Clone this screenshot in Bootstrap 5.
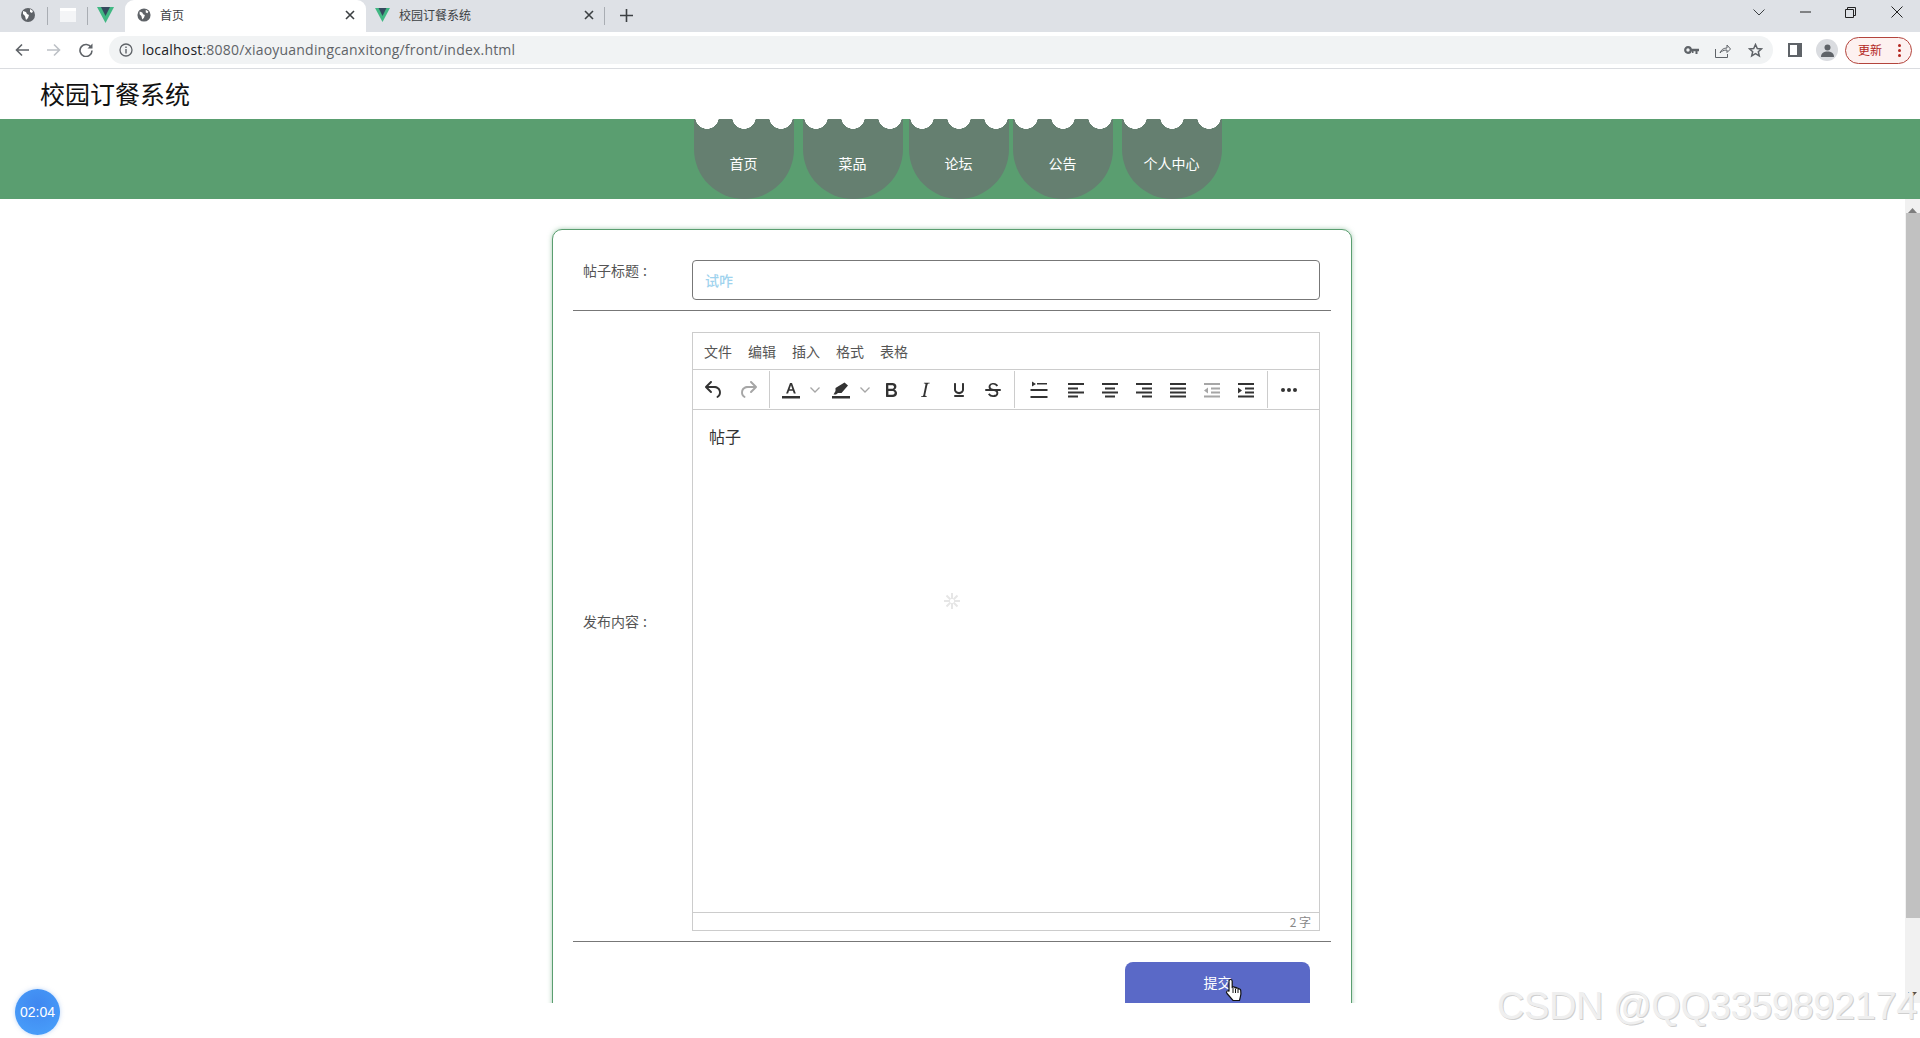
<!DOCTYPE html>
<html lang="zh-CN">
<head>
  <meta charset="UTF-8" />
  <meta name="viewport" content="width=device-width, initial-scale=1" />
  <title>校园订餐系统</title>
  <link href="https://cdn.jsdelivr.net/npm/bootstrap@5.3.3/dist/css/bootstrap.min.css" rel="stylesheet" />
  <style>
    body {
      height: 1038px;
      overflow: hidden;
      background: #fff;
      font-family: "Liberation Sans", "Noto Sans CJK SC", sans-serif;
    }
    .cn { font-family: "Noto Sans CJK SC", sans-serif; }

    /* browser chrome */
    .tab-strip { height: 32px; background: #dee1e6; color: #3c4043; font-size: 12px; }
    .tab-strip > div { padding-bottom: 2px; }
    .tab-strip > .win-btns { padding-bottom: 8px; }
    .strip-slot { width: 19px; height: 32px; margin-left: 18px; margin-right: 10px; }
    .strip-sep { width: 1px; height: 18px; background: #a9adb3; }
    .tab-live { width: 241px; height: 32px; background: #fff; border-radius: 9px 9px 0 0; margin-left: 3px; padding: 0 11px 0 12px; }
    .tab-idle { width: 238px; height: 32px; padding: 0 10px 0 9px; }
    .tab-name { flex: 1; margin-left: 9px; }
    .win-btns { margin-left: auto; }
    .win-btn { width: 41px; height: 28px; }
    .addr-row { height: 37px; border-bottom: 1px solid #dadce0; background: #fff; padding-top: 4px; }
    .addr-nav { width: 32px; height: 28px; }
    .addr-pill { width: 1664px; height: 28px; background: #f1f3f4; margin-left: 7px; padding: 0 2px 0 10px; font-size: 14px; color: #5f6368; }
    .addr-pill b { font-weight: 400; color: #202124; }
    .addr-url { margin-left: 9px; margin-top: -1px; font-family: "Open Sans", sans-serif; font-size: 14px; letter-spacing: .2px; }
    .addr-end { margin-left: auto; }
    .addr-tool { width: 32px; }
    .avatar-dot { width: 22px; height: 22px; background: #dadce0; margin-left: 14px; }
    .update-pill { width: 67px; height: 27px; margin-left: 7px; background: #fdf1f0; border: 1px solid #b3443c; color: #b3261e; font-size: 12px; padding: 0 10px 0 12px; }

    /* site header */
    .site-head { height: 50px; padding-left: 40px; font-size: 25px; color: #111; }
    .site-nav { height: 80px; background: #5a9e70; padding-right: 5px; gap: 6px; }
    .nav-pill {
      width: 100px;
      height: 80px;
      padding: 8px 0 0;
      color: #fff;
      font-size: 14px;
      background:
        radial-gradient(circle 12px at 13px -2px, #fff 97%, transparent 100%),
        radial-gradient(circle 12px at 50px -2px, #fff 97%, transparent 100%),
        radial-gradient(circle 12px at 87px -2px, #fff 97%, transparent 100%),
        #657f70;
      border-radius: 0 0 50px 50px;
    }
    .nav-pill:hover, .nav-pill:focus { color: #fff; }
    .nav-pill-far { margin-left: 3px; }
    .nav-pill-near { margin-left: -2px; }

    /* page */
    .page-area { height: 804px; }
    .page-main { padding: 30px 1px 0 0; }
    .post-card {
      width: 800px;
      height: 900px;
      border: 1px solid #5a9e70;
      border-radius: 10px;
      box-shadow: 0 0 5px rgba(90, 158, 112, .55);
      padding: 30px 20px 0;
      color: #555;
      font-size: 14px;
    }
    .form-line { padding: 0 10px; border-bottom: 1px solid #777; }
    .field-name { width: 109px; flex: none; line-height: 24px; }
    .field-colon { margin-left: 4px; }
    .title-input.form-control {
      height: 40px;
      width: 628px;
      flex: none;
      border: 1px solid #777;
      border-radius: 4px;
      padding: 0 12px;
      color: #9fd3ee;
      font-size: 14px;
      font-weight: 500;
    }
    .line-title { padding-bottom: 10px; }
    .line-title .field-name { margin-top: -2px; }
    .line-editor { padding-top: 21px; padding-bottom: 10px; }
    .line-editor .field-name { padding-bottom: 21px; }

    /* editor */
    .editor-box { width: 628px; height: 599px; border: 1px solid #ccc; }
    .editor-menu { height: 37px; padding-left: 11px; gap: 16px; border-bottom: 1px solid #ccc; color: #555; font-size: 14px; flex: none; }
    .editor-bar { height: 40px; border-bottom: 1px solid #ccc; flex: none; padding-top: 1px; }
    .bar-group { height: 37px; padding-top: 2px; padding-left: 4px; padding-right: 4px; border-right: 1px solid #ccc; }
    .bar-group-mid { padding-left: 4px; padding-right: 4px; }
    .bar-group-align { padding-left: 7px; padding-right: 4px; }
    .bar-group-end { border-right: 0; padding-left: 4px; }
    .bar-btn { width: 34px; height: 34px; flex: none; border: 0; background: transparent; padding: 0; color: #333; }
    .bar-btn svg { display: block; margin: 5px; }
    .bar-btn.is-off { color: #a6a6a6; }
    .bar-caret { width: 14px; height: 34px; flex: none; margin-right: 2px; }
    .bar-gap { margin-right: 3px; }
    .editor-body { flex: 1; padding: 14px 16px; color: #333; font-size: 16px; line-height: 24px; }
    .editor-spin { position: absolute; left: 249px; top: 181px; }
    .editor-foot { height: 18px; flex: none; border-top: 1px solid #ccc; padding-right: 8px; color: #888; font-size: 12px; line-height: 17px; }

    .send-line { padding: 20px 21px 0 0; }
    .send-btn {
      position: relative;
      width: 185px;
      height: 48px;
      padding: 0 0 7px;
      border: 0;
      border-radius: 8px;
      background: #5a69c7;
      color: #fff;
      font-size: 14px;
    }
    .send-btn:hover { background: #5a69c7; color: #fff; }
    .send-hand { position: absolute; left: 100px; top: 16px; }

    .page-scroll { width: 15px; flex: none; background: #f1f1f1; margin-left: auto; }
    .scroll-thumb { height: 705px; margin: 0 0 0 1px; background: #c1c1c1; }
    .scroll-up { height: 14px; }
    .scroll-down { height: 20px; margin-top: auto; padding-bottom: 6px; }

    /* overlays */
    .rec-timer {
      position: absolute;
      left: 15px;
      top: 989px;
      width: 45px;
      height: 46px;
      color: #fff;
      font-size: 14px;
      background: radial-gradient(circle at 50% 35%, #3f87f0, #4aa2fb);
      box-shadow: 0 0 4px rgba(120, 170, 240, .5);
    }
    .mark-text {
      position: absolute;
      right: 3px;
      top: 983px;
      font-size: 38px;
      line-height: 46px;
      color: #efefef;
      letter-spacing: -.4px;
      text-shadow: 1px 1px 0 #cfcfcf;
      white-space: nowrap;
    }
  </style>
</head>
<body class="position-relative">

  <!-- tab strip -->
  <div class="tab-strip d-flex align-items-center">
    <div class="strip-slot d-flex align-items-center justify-content-center">
      <svg width="16" height="16" viewBox="0 0 16 16"><circle cx="8" cy="8" r="7" fill="#5f6368"/><path d="M3 4l3 1 1 2 2 1-1 3-2 2-1-4-2-2zM10 2l3 2-1 2-2-1z" fill="#fff"/></svg>
    </div>
    <span class="strip-sep"></span>
    <div class="d-flex align-items-center justify-content-center" style="width:39px">
      <svg width="16" height="14" viewBox="0 0 16 14"><rect width="16" height="14" fill="#f4f5f7"/><rect width="16" height="3" fill="#fff"/></svg>
    </div>
    <span class="strip-sep"></span>
    <div class="d-flex align-items-center justify-content-center" style="width:34px">
      <svg width="17" height="16" viewBox="0 0 17 16"><path d="M0 0h17L8.500 16z" fill="#41b883"/><path d="M4 0h9L8.500 9z" fill="#35495e"/></svg>
    </div>

    <div class="tab-live d-flex align-items-center cn">
      <svg width="14" height="14" viewBox="0 0 16 16"><circle cx="8" cy="8" r="7.500" fill="#5f6368"/><path d="M3 4l3 1 1 2 2 1-1 3-2 2-1-4-2-2zM10 2l3 2-1 2-2-1z" fill="#fff"/></svg>
      <span class="tab-name">首页</span>
      <svg width="10" height="10" viewBox="0 0 10 10"><path d="M1 1l8 8M9 1l-8 8" stroke="#3c4043" stroke-width="1.600"/></svg>
    </div>
    <div class="tab-idle d-flex align-items-center cn">
      <svg width="15" height="14" viewBox="0 0 17 16"><path d="M0 0h17L8.500 16z" fill="#41b883"/><path d="M4 0h9L8.500 9z" fill="#35495e"/></svg>
      <span class="tab-name">校园订餐系统</span>
      <svg width="10" height="10" viewBox="0 0 10 10"><path d="M1 1l8 8M9 1l-8 8" stroke="#3c4043" stroke-width="1.600"/></svg>
    </div>
    <span class="strip-sep"></span>
    <div class="d-flex align-items-center justify-content-center" style="width:43px">
      <svg width="13" height="13" viewBox="0 0 13 13"><path d="M6.500 0v13M0 6.500h13" stroke="#3c4043" stroke-width="1.600"/></svg>
    </div>

    <div class="win-btns d-flex align-items-center">
      <div class="win-btn d-flex align-items-center justify-content-center">
        <svg width="12" height="7" viewBox="0 0 12 7"><path d="M.5.500L6 6l5.500-5.500" fill="none" stroke="#3c4043"/></svg>
      </div>
      <div class="win-btn d-flex align-items-center justify-content-center" style="margin-left:6px">
        <svg width="11" height="2" viewBox="0 0 11 2"><path d="M0 1h11" stroke="#222" stroke-width="1"/></svg>
      </div>
      <div class="win-btn d-flex align-items-center justify-content-center" style="margin-left:4px">
        <svg width="11" height="11" viewBox="0 0 11 11"><path d="M.5 2.500h8v8h-8zM2.500 2.500v-2h8v8h-2" fill="none" stroke="#222"/></svg>
      </div>
      <div class="win-btn d-flex align-items-center justify-content-center" style="margin-left:5px;margin-right:3px">
        <svg width="12" height="12" viewBox="0 0 12 12"><path d="M.5.500l11 11M11.500.500l-11 11" stroke="#222"/></svg>
      </div>
    </div>
  </div>

  <!-- address row -->
  <div class="addr-row d-flex align-items-start">
    <div class="d-flex" style="padding-left:6px">
      <div class="addr-nav d-flex align-items-center justify-content-center">
        <svg width="14" height="14" viewBox="0 0 14 14"><path d="M14 7H2M7 1.500L1.500 7 7 12.500" fill="none" stroke="#5f6368" stroke-width="1.600"/></svg>
      </div>
      <div class="addr-nav d-flex align-items-center justify-content-center">
        <svg width="14" height="14" viewBox="0 0 14 14"><path d="M0 7h12M7 1.500L12.500 7 7 12.500" fill="none" stroke="#bdc1c6" stroke-width="1.600"/></svg>
      </div>
      <div class="addr-nav d-flex align-items-center justify-content-center">
        <svg width="14" height="14" viewBox="0 0 14 14"><path d="M12.200 4.500A6 6 0 1 0 13 7.500" fill="none" stroke="#5f6368" stroke-width="1.600"/><path d="M13.500.500v5h-5z" fill="#5f6368"/></svg>
      </div>
    </div>
    <div class="addr-pill rounded-pill d-flex align-items-center">
      <svg width="14" height="14" viewBox="0 0 14 14"><circle cx="7" cy="7" r="6" fill="none" stroke="#5f6368" stroke-width="1.300"/><path d="M7 6v4.500M7 3.500v1.500" stroke="#5f6368" stroke-width="1.400"/></svg>
      <span class="addr-url"><b>localhost</b>:8080/xiaoyuandingcanxitong/front/index.html</span>
      <div class="addr-end d-flex align-items-center">
        <div class="addr-tool d-flex justify-content-center">
          <svg width="15" height="8" viewBox="0 0 15 8"><circle cx="4" cy="4" r="2.800" fill="none" stroke="#5f6368" stroke-width="2.200"/><path d="M6 2.800h9v2.400h-1.500V8h-2V5.200H9.500V7H8V5.200H6z" fill="#5f6368"/></svg>
        </div>
        <div class="addr-tool d-flex justify-content-center">
          <svg width="16" height="15" viewBox="0 0 16 15"><path d="M.5 6v8.500h12V11M5 10c1-3.500 4-5 7-5V2l3.500 4L12 9.500V7C9 7 6.500 8 5 10z" fill="none" stroke="#5f6368"/></svg>
        </div>
        <div class="addr-tool d-flex justify-content-center">
          <svg width="15" height="15" viewBox="0 0 15 15"><path d="M7.500 1.500l1.800 4 4.200.4-3.200 2.800 1 4.200-3.800-2.300-3.800 2.300 1-4.200L1.500 5.900l4.200-.4z" fill="none" stroke="#5f6368" stroke-width="1.500"/></svg>
        </div>
      </div>
    </div>
    <div class="d-flex align-items-center" style="height:28px;margin-left:15px">
      <svg width="14" height="14" viewBox="0 0 14 14"><path d="M0 0h14v14H0z" fill="#5f6368"/><path d="M2 2h7v10H2z" fill="#fff"/></svg>
      <div class="avatar-dot rounded-circle d-flex align-items-center justify-content-center">
        <svg width="13" height="13" viewBox="0 0 13 13"><circle cx="6.500" cy="3.500" r="3" fill="#5f6368"/><path d="M0 13c0-4 3-5.500 6.500-5.500S13 9 13 13z" fill="#5f6368"/></svg>
      </div>
      <div class="update-pill rounded-pill d-flex align-items-center justify-content-between cn">
        <span>更新</span>
        <svg width="3" height="13" viewBox="0 0 3 13"><circle cx="1.500" cy="1.500" r="1.500" fill="#b3261e"/><circle cx="1.500" cy="6.500" r="1.500" fill="#b3261e"/><circle cx="1.500" cy="11.500" r="1.500" fill="#b3261e"/></svg>
      </div>
    </div>
  </div>

  <!-- site -->
  <header class="site-head d-flex align-items-center cn">校园订餐系统</header>
  <nav class="site-nav nav justify-content-center cn">
    <a class="nav-link nav-pill d-flex align-items-center justify-content-center" href="#">首页</a>
    <a class="nav-link nav-pill nav-pill-far d-flex align-items-center justify-content-center" href="#">菜品</a>
    <a class="nav-link nav-pill d-flex align-items-center justify-content-center" href="#">论坛</a>
    <a class="nav-link nav-pill nav-pill-near d-flex align-items-center justify-content-center" href="#">公告</a>
    <a class="nav-link nav-pill nav-pill-far d-flex align-items-center justify-content-center" href="#">个人中心</a>
  </nav>

  <div class="page-area d-flex overflow-hidden">
    <main class="page-main flex-grow-1">
      <form class="post-card card mx-auto cn" onsubmit="return false">
        <div class="form-line line-title d-flex">
          <label class="field-name" for="postTitle">帖子标题<span class="field-colon">:</span></label>
          <input class="title-input form-control" id="postTitle" type="text" value="试咋" />
        </div>

        <div class="form-line line-editor d-flex align-items-center">
          <div class="field-name">发布内容<span class="field-colon">:</span></div>
          <div class="editor-box d-flex flex-column">
            <div class="editor-menu d-flex align-items-center">
              <span>文件</span><span>编辑</span><span>插入</span><span>格式</span><span>表格</span>
            </div>
            <div class="editor-bar d-flex">
              <div class="bar-group d-flex">
                <button class="bar-btn" type="button"><svg width="24" height="24" viewBox="0 0 24 24" fill="currentColor"><path d="M6.400 8H12c3.700 0 6.200 2 6.800 5.100.6 2.700-.4 5.600-2.900 6.700-.5.2-1.100 0-1.300-.5-.2-.5 0-1.100.5-1.300 1.600-.7 2.300-2.800 1.800-4.500-.4-2-2.200-3.500-4.900-3.500H6.400l3.300 3.300c.4.400.4 1 0 1.400-.4.400-1 .4-1.400 0l-5-5a1 1 0 0 1 0-1.400l5-5c.4-.4 1-.4 1.400 0 .4.400.4 1 0 1.400L6.400 8z"/></svg></button>
                <button class="bar-btn is-off" type="button"><svg width="24" height="24" viewBox="0 0 24 24" fill="currentColor"><path transform="matrix(-1 0 0 1 24 0)" d="M6.400 8H12c3.700 0 6.200 2 6.800 5.100.6 2.700-.4 5.600-2.900 6.700-.5.2-1.100 0-1.300-.5-.2-.5 0-1.100.5-1.300 1.600-.7 2.300-2.800 1.800-4.500-.4-2-2.200-3.500-4.900-3.500H6.400l3.300 3.300c.4.400.4 1 0 1.400-.4.400-1 .4-1.400 0l-5-5a1 1 0 0 1 0-1.400l5-5c.4-.4 1-.4 1.400 0 .4.400.4 1 0 1.400L6.400 8z"/></svg></button>
              </div>
              <div class="bar-group bar-group-mid d-flex">
                <button class="bar-btn" type="button"><svg width="24" height="24" viewBox="0 0 24 24" fill="currentColor"><path d="M3 18h18v2.500H3z"/><path d="M11 5h2l3.800 10.500h-2l-.9-2.700H10l-.9 2.700h-2zm-.4 6.200h2.800L12 7.300z"/></svg></button>
                <div class="bar-caret d-flex align-items-center justify-content-center"><svg width="10" height="6" viewBox="0 0 10 6"><path d="M.5.500L5 5l4.500-4.500" fill="none" stroke="#a6a6a6" stroke-width="1.300"/></svg></div>
                <button class="bar-btn" type="button"><svg width="24" height="24" viewBox="0 0 24 24" fill="currentColor"><path d="M3 18h18v2.500H3z"/><path d="M15.500 4.500l3.500 3-6.500 7.500H9l-2 1.500H4.500l2-3.500v-3z"/></svg></button>
                <div class="bar-caret d-flex align-items-center justify-content-center"><svg width="10" height="6" viewBox="0 0 10 6"><path d="M.5.500L5 5l4.500-4.500" fill="none" stroke="#a6a6a6" stroke-width="1.300"/></svg></div>
                <button class="bar-btn" type="button"><svg width="24" height="24" viewBox="0 0 24 24" fill="currentColor"><path d="M7.800 19c-.3 0-.5 0-.6-.2l-.2-.5V5.700c0-.2 0-.4.2-.5l.6-.2h5c1.500 0 2.700.3 3.500 1 .7.600 1.100 1.400 1.100 2.500a3 3 0 0 1-.6 1.900c-.4.600-1 1-1.600 1.200.4.100.9.300 1.300.6s.8.700 1 1.200c.4.400.5 1 .5 1.600 0 1.300-.4 2.300-1.300 3-.8.700-2.100 1-3.800 1H7.800zm5-8.300c.6 0 1.200-.1 1.600-.5.400-.3.600-.7.600-1.300 0-1.100-.8-1.700-2.300-1.700H9.300v3.500h3.500zm.5 6c.7 0 1.300-.1 1.700-.4.400-.4.600-.9.600-1.500s-.2-1-.7-1.400c-.4-.3-1-.4-2-.4H9.400v3.800h3.900z"/></svg></button>
                <button class="bar-btn" type="button"><svg width="24" height="24" viewBox="0 0 24 24" fill="currentColor"><path d="M16.700 4.700l-.1.900h-.3c-.6 0-1 0-1.400.3-.3.300-.4.600-.5 1.100l-2.100 9.800v.6c0 .5.400.8 1.400.8h.2l-.2.800H8l.2-.8h.2c1.100 0 1.800-.5 2-1.500l2-9.800.1-.5c0-.6-.4-.8-1.400-.8h-.3l.2-.9h5.800z"/></svg></button>
                <button class="bar-btn" type="button"><svg width="24" height="24" viewBox="0 0 24 24" fill="currentColor"><path d="M16 5c.6 0 1 .4 1 1v5.500a4 4 0 0 1-.4 1.800l-1 1.400a5.300 5.300 0 0 1-5.500 1 5 5 0 0 1-1.600-1c-.5-.4-.8-.9-1.100-1.400a4 4 0 0 1-.4-1.800V6c0-.6.400-1 1-1s1 .4 1 1v5.500c0 .3 0 .6.200 1l.6.700a3.300 3.300 0 0 0 2.200.8 3.400 3.400 0 0 0 2.200-.8c.3-.2.500-.4.600-.7.200-.4.200-.7.200-1V6c0-.6.400-1 1-1zM8 17h8c.6 0 1 .4 1 1s-.4 1-1 1H8a1 1 0 0 1 0-2z"/></svg></button>
                <button class="bar-btn" type="button"><svg width="24" height="24" viewBox="0 0 24 24" fill="currentColor"><path d="M15.600 8.500c-.5-.7-1-1.100-1.300-1.300-.6-.4-1.300-.6-2-.6-2.700 0-2.800 1.700-2.800 2.100 0 1.600 1.800 2 3.200 2.300 4.400.9 4.600 2.800 4.600 3.900 0 1.400-.7 4.100-5 4.100A6.200 6.200 0 0 1 7 16.400l1.500-1.100c.4.600 1.600 2 3.700 2 1.600 0 2.500-.4 3-1.200.4-.8.3-2-.8-2.600-.7-.4-1.600-.7-2.900-1-1-.2-3.900-.8-3.900-3.600C7.600 6 10.300 5 12.400 5c2.900 0 4.200 1.600 4.700 2.400l-1.500 1.100z"/><path d="M5 11h14a1 1 0 0 1 0 2H5a1 1 0 0 1 0-2z"/></svg></button>
              </div>
              <div class="bar-group bar-group-align d-flex">
                <button class="bar-btn bar-gap" type="button"><svg width="24" height="24" viewBox="0 0 24 24" fill="currentColor"><path d="M5 3.500l4 2.500-4 2.500zM10 5h10v1.600H10zM3.500 11h17v2h-17zM3.500 18h17v2h-17z"/></svg></button>
                <button class="bar-btn" type="button"><svg width="24" height="24" viewBox="0 0 24 24" fill="currentColor"><path d="M4 5h16v2H4zM4 9.500h10v2H4zM4 13.500h16v2H4zM4 17.500h10v2H4z"/></svg></button>
                <button class="bar-btn" type="button"><svg width="24" height="24" viewBox="0 0 24 24" fill="currentColor"><path d="M4 5h16v2H4zM7 9.500h10v2H7zM4 13.500h16v2H4zM7 17.500h10v2H7z"/></svg></button>
                <button class="bar-btn" type="button"><svg width="24" height="24" viewBox="0 0 24 24" fill="currentColor"><path d="M4 5h16v2H4zM10 9.500h10v2H10zM4 13.500h16v2H4zM10 17.500h10v2H10z"/></svg></button>
                <button class="bar-btn" type="button"><svg width="24" height="24" viewBox="0 0 24 24" fill="currentColor"><path d="M4 5h16v2H4zM4 9.500h16v2H4zM4 13.500h16v2H4zM4 17.500h16v2H4z"/></svg></button>
                <button class="bar-btn is-off" type="button"><svg width="24" height="24" viewBox="0 0 24 24" fill="currentColor"><path d="M4 5h16v2H4zM11 9.500h9v2h-9zM11 13.500h9v2h-9zM4 17.500h16v2H4zM8 9.500v6l-4-3z"/></svg></button>
                <button class="bar-btn" type="button"><svg width="24" height="24" viewBox="0 0 24 24" fill="currentColor"><path d="M4 5h16v2H4zM11 9.500h9v2h-9zM11 13.500h9v2h-9zM4 17.500h16v2H4zM4 9.500v6l4-3z"/></svg></button>
              </div>
              <div class="bar-group bar-group-end d-flex">
                <button class="bar-btn" type="button"><svg width="24" height="24" viewBox="0 0 24 24" fill="currentColor"><circle cx="6" cy="12" r="2"/><circle cx="12" cy="12" r="2"/><circle cx="18" cy="12" r="2"/></svg></button>
              </div>
            </div>
            <div class="editor-body position-relative">
              帖子
              <svg class="editor-spin" width="20" height="20" viewBox="0 0 20 20"><path d="M10 2v6M10 12v6M2 10h6M12 10h6M4.500 4.500l4 4M11.500 11.500l4 4M15.500 4.500l-4 4M8.500 11.500l-4 4" stroke="#e6e6e6" stroke-width="2"/></svg>
            </div>
            <div class="editor-foot text-end">2 字</div>
          </div>
        </div>

        <div class="send-line d-flex justify-content-end">
          <button class="send-btn btn" type="submit">
            提交
            <svg class="send-hand" width="19" height="24" viewBox="0 0 19 24"><path d="M5.500 1.500c1 0 1.700.8 1.700 1.800v6l1-.4c.8-.2 1.400.1 1.700.7.800-.4 1.600-.2 2 .6.800-.3 1.600 0 1.900.8.900-.2 1.700.4 1.900 1.300.4 2.300.3 4.800-.4 6.800L14.500 22.500H8L2 15.500c-.7-.9-.6-1.900 0-2.400.7-.6 1.700-.4 2 .3V3.300c0-1 .6-1.800 1.500-1.800z" fill="#fff" stroke="#111" stroke-width="1.200"/><path d="M8 10v5M10.500 10.500V15M13 11v4" stroke="#111" stroke-width="1"/></svg>
          </button>
        </div>
      </form>
    </main>

    <div class="page-scroll d-flex flex-column">
      <div class="scroll-up d-flex align-items-end justify-content-center">
        <svg width="9" height="5" viewBox="0 0 9 5"><path d="M4.500 0L9 5H0z" fill="#7d7d7d"/></svg>
      </div>
      <div class="scroll-thumb"></div>
      <div class="scroll-down d-flex align-items-end justify-content-center">
        <svg width="9" height="5" viewBox="0 0 9 5"><path d="M4.500 5L9 0H0z" fill="#505050"/></svg>
      </div>
    </div>
  </div>

  <div class="rec-timer rounded-circle d-flex align-items-center justify-content-center">02:04</div>
  <div class="mark-text">CSDN @QQ3359892174</div>

  <script src="https://cdn.jsdelivr.net/npm/bootstrap@5.3.3/dist/js/bootstrap.bundle.min.js"></script>
</body>
</html>
